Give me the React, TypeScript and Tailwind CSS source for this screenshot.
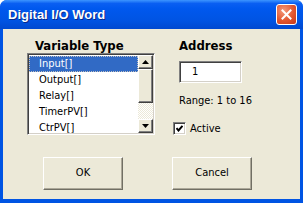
import React from 'react';

const items = ['Input[]', 'Output[]', 'Relay[]', 'TimerPV[]', 'CtrPV[]'];

const ArrowUp = () => (
  <svg width="7" height="4" viewBox="0 0 7 4">
    <path d="M3.5 0 L7 4 L0 4 Z" fill="#000" />
  </svg>
);

const ArrowDown = () => (
  <svg width="7" height="4" viewBox="0 0 7 4">
    <path d="M0 0 L7 0 L3.5 4 Z" fill="#000" />
  </svg>
);

const XpButton: React.FC<{ label: string }> = ({ label }) => (
  <button className="w-[80px] h-[33px] bg-[#ece9d8] border border-t-white border-l-white border-b-[#716f64] border-r-[#716f64] shadow-[inset_-1px_-1px_0_#aca899] text-[11px] text-black flex items-center justify-center">
    {label}
  </button>
);

const App: React.FC = () => {
  return (
    <div className="w-[303px] h-[203px] bg-white">
      <div
        className="w-full h-full flex flex-col bg-[#0054e3] rounded-t-[7px] overflow-hidden"
        style={{ fontFamily: '"DejaVu Sans Condensed", "DejaVu Sans", sans-serif' }}
      >
        {/* Title bar */}
        <div className="h-[29px] shrink-0 flex items-center justify-between pl-[8px] pr-[6px] bg-[linear-gradient(to_bottom,#3d95ff_0%,#0a5ff2_12%,#0058ee_30%,#0054e3_70%,#0049d0_100%)]">
          <span
            className="text-white font-bold text-[13px] [text-shadow:1px_1px_0_#0a2a8a]"
            style={{ fontFamily: '"Liberation Sans", Arial, sans-serif' }}
          >
            Digital I/O Word
          </span>
          <div className="w-[21px] h-[21px] rounded-[3px] border border-white bg-[radial-gradient(circle_at_35%_30%,#f49a7c_0%,#e2562f_55%,#c6381a_100%)] flex items-center justify-center">
            <svg width="11" height="11" viewBox="0 0 11 11">
              <path d="M1.5 1.5 L9.5 9.5 M9.5 1.5 L1.5 9.5" stroke="#fff" strokeWidth="2" strokeLinecap="square" />
            </svg>
          </div>
        </div>

        {/* Body */}
        <div className="flex-1 mx-[3px] mb-[4px] bg-[#ece9d8] px-[24px] pt-[10px] text-black">
          <div className="flex gap-[18px]">
            {/* Variable type */}
            <div className="w-[128px] flex flex-col">
              <div className="h-[14px] leading-[14px] text-[13px] font-bold pl-[8px]">Variable Type</div>
              <div className="h-[82px] flex bg-white border border-t-[#808080] border-l-[#808080] border-b-white border-r-white shadow-[inset_1px_1px_0_#404040,inset_-1px_-1px_0_#d4d0c8] p-[1px] overflow-hidden">
                <div className="flex-1 flex flex-col overflow-hidden text-[11px] pt-[1px]">
                  {items.map((item, i) => (
                    <div
                      key={item}
                      className={
                        i === 0
                          ? 'h-[16px] shrink-0 leading-[14px] pl-[9px] bg-[#316ac5] text-white border border-dotted border-[#c0c0c0]'
                          : 'h-[16px] shrink-0 leading-[16px] pl-[10px]'
                      }
                    >
                      {item}
                    </div>
                  ))}
                </div>
                {/* Scrollbar */}
                <div className="w-[15px] flex flex-col bg-[repeating-conic-gradient(#ece9d8_0%_25%,#ffffff_0%_50%)] bg-[length:2px_2px]">
                  <div className="h-[14px] shrink-0 bg-[#ece9d8] border border-t-white border-l-white border-b-[#404040] border-r-[#404040] shadow-[inset_-1px_-1px_0_#808080] flex items-center justify-center">
                    <ArrowUp />
                  </div>
                  <div className="h-[34px] shrink-0 bg-[#ece9d8] border border-t-white border-l-white border-b-[#404040] border-r-[#404040] shadow-[inset_-1px_-1px_0_#808080]" />
                  <div className="flex-1" />
                  <div className="h-[14px] shrink-0 bg-[#ece9d8] border border-t-white border-l-white border-b-[#404040] border-r-[#404040] shadow-[inset_-1px_-1px_0_#808080] flex items-center justify-center">
                    <ArrowDown />
                  </div>
                </div>
              </div>
            </div>

            {/* Address */}
            <div className="flex flex-col">
              <div className="h-[14px] leading-[14px] text-[13px] font-bold pl-[6px]">Address</div>
              <div className="ml-[6px] mt-[8px] w-[63px] h-[22px] bg-white border border-t-[#808080] border-l-[#808080] border-b-white border-r-white shadow-[inset_1px_1px_0_#404040,inset_-1px_-1px_0_#d4d0c8] text-[11px] leading-[20px] pl-[12px]">
                1
              </div>
              <div className="ml-[6px] mt-[11px] h-[14px] leading-[14px] text-[11px]">Range: 1 to 16</div>
              <div className="mt-[14px] flex items-center gap-[4px]">
                <div className="w-[13px] h-[13px] bg-white border border-t-[#808080] border-l-[#808080] border-b-white border-r-white shadow-[inset_1px_1px_0_#404040,inset_-1px_-1px_0_#d4d0c8] flex items-center justify-center">
                  <svg width="7" height="7" viewBox="0 0 7 7">
                    <path d="M0.5 3 L2.5 5.5 L6.5 0.8" stroke="#000" strokeWidth="2" fill="none" />
                  </svg>
                </div>
                <span className="text-[11px] leading-[13px]">Active</span>
              </div>
            </div>
          </div>

          {/* Buttons */}
          <div className="mt-[22px] ml-[16px] flex gap-[49px]">
            <XpButton label="OK" />
            <XpButton label="Cancel" />
          </div>
        </div>
      </div>
    </div>
  );
};

export default App;
